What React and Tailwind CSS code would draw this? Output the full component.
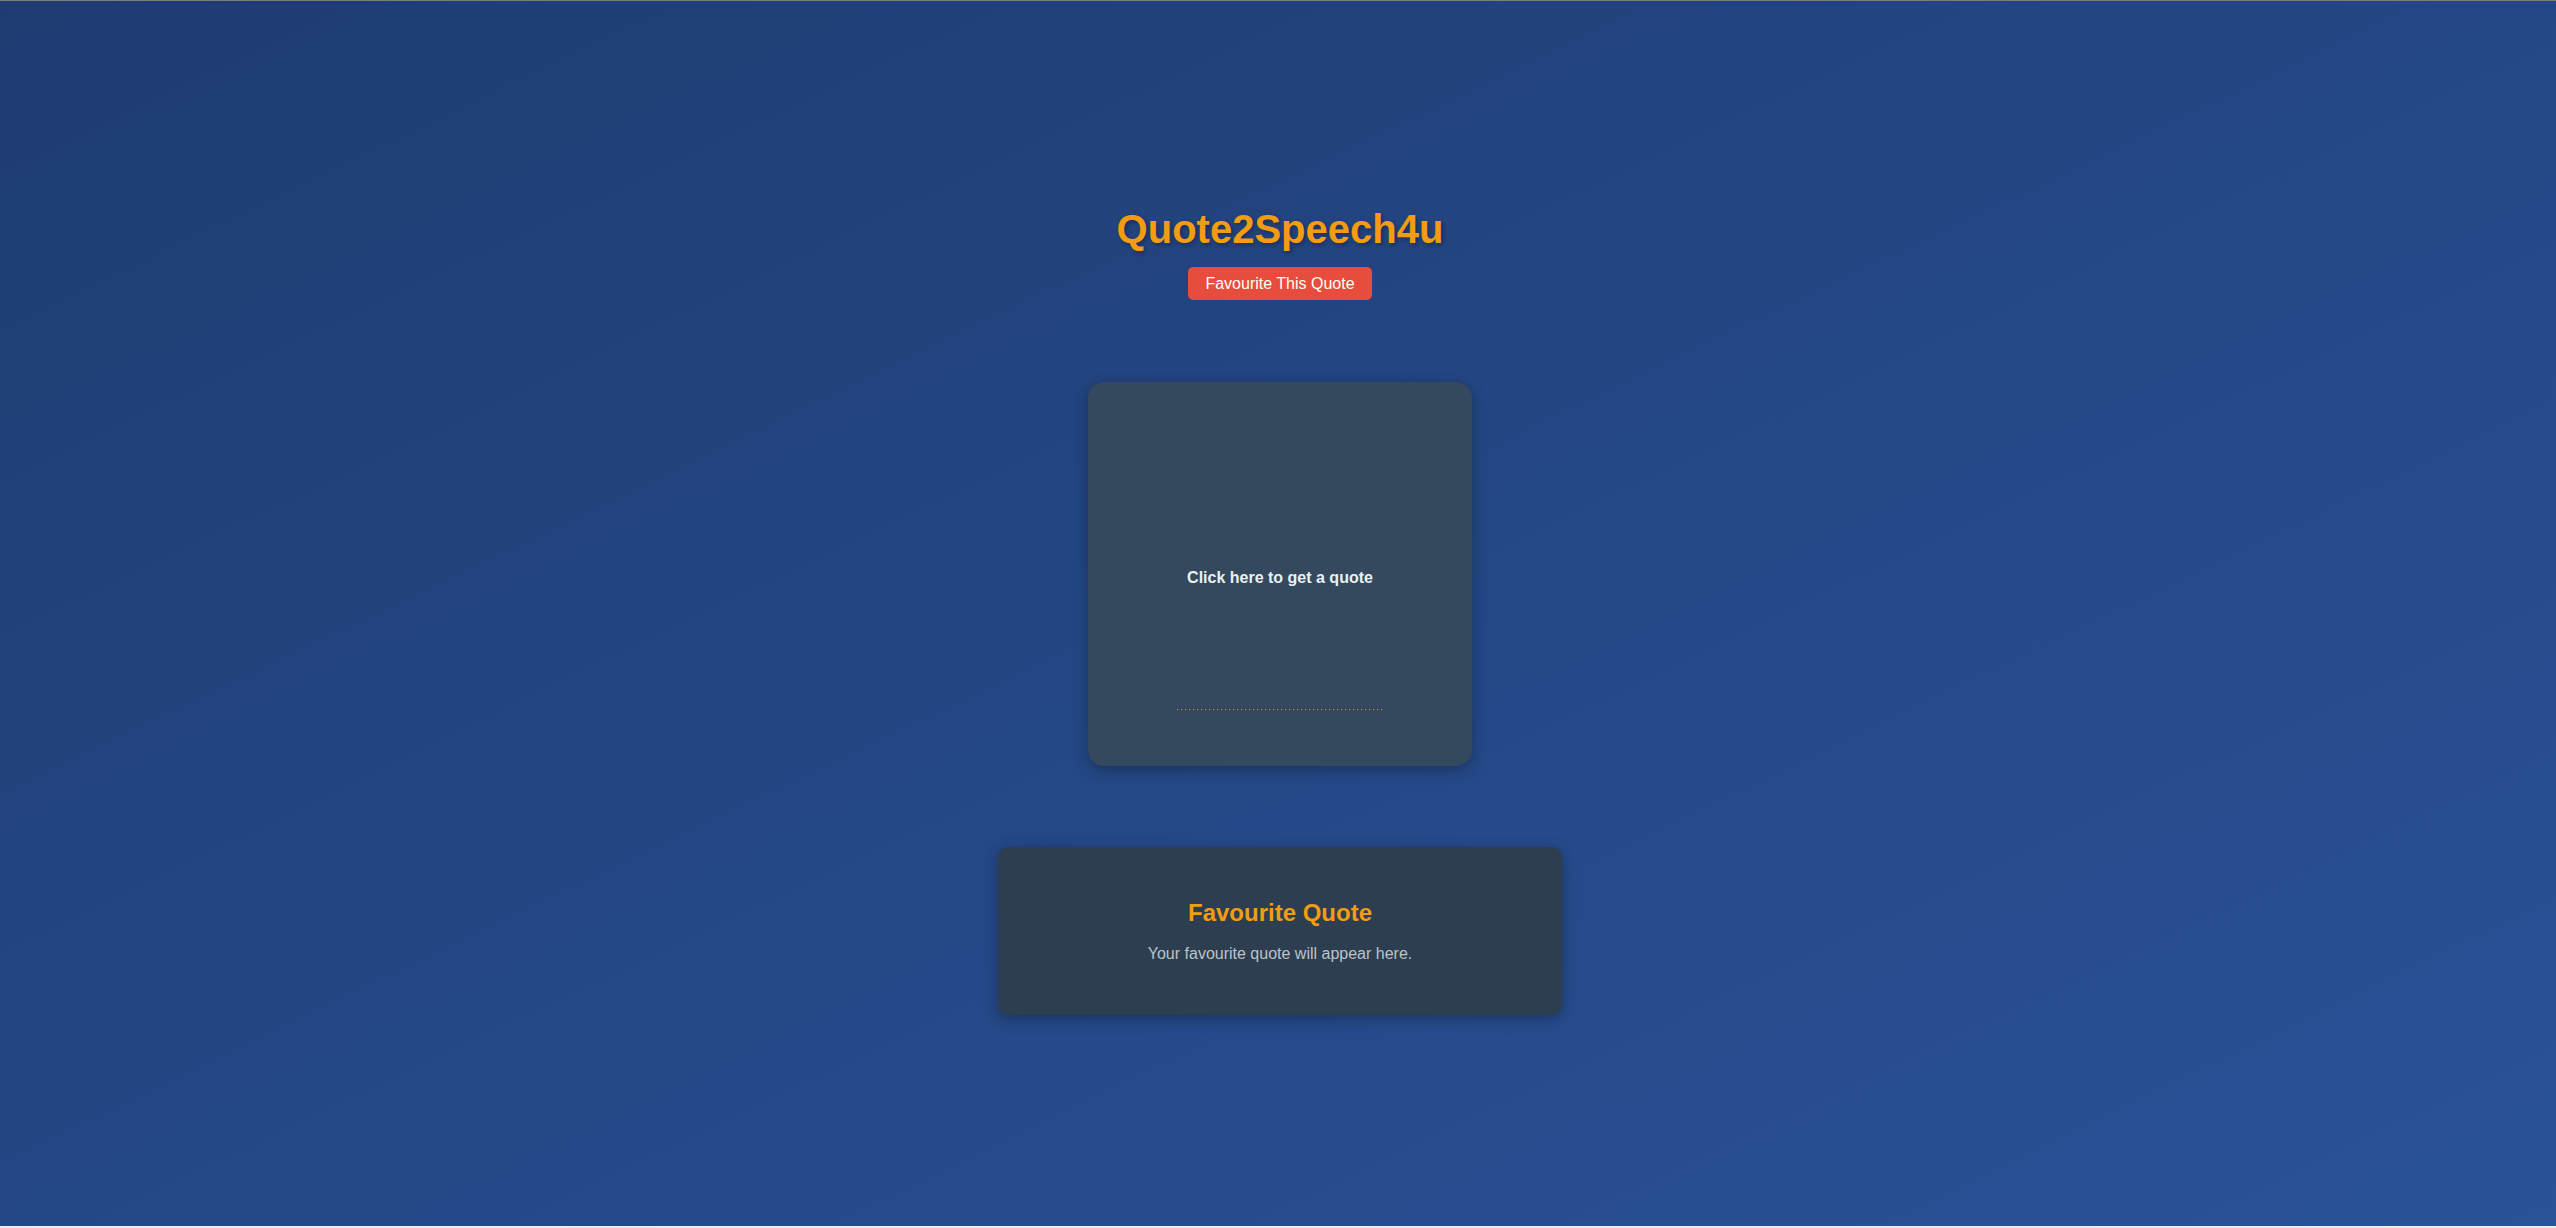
export default function App() {
  return (
    <div className="flex h-screen flex-col font-['Liberation_Sans',Arial,sans-serif]">
      <div className="h-px bg-[#7c7c7c]" />
      <div className="flex flex-1 flex-col items-center bg-linear-to-br from-[#1e3c72] to-[#2a5298] pl-1">
        {/* Header */}
        <h1 className="mt-[205px] text-[40px] leading-[46px] font-bold text-[#f39c12] [text-shadow:2px_2px_4px_rgba(0,0,0,0.3)]">
          Quote2Speech4u
        </h1>
        <button className="mt-[15px] h-[33px] rounded-[5px] bg-[#e74c3c] px-[17px] text-[16px] leading-[18px] text-white">
          Favourite This Quote
        </button>

        {/* Quote card */}
        <div className="mt-[82px] flex h-[384px] w-[384px] flex-col items-center rounded-2xl bg-[#34495e] shadow-[0_4px_15px_rgba(0,0,0,0.3)]">
          <p className="mt-[187px] text-[16px] leading-[18px] font-bold text-[#ecf0f1]">
            Click here to get a quote
          </p>
          <svg className="mt-[122px]" width="206" height="1" viewBox="0 0 206 1">
            <line x1="0" y1="0.5" x2="206" y2="0.5" stroke="#f39c12" strokeWidth="1" strokeDasharray="1 3" />
          </svg>
        </div>

        {/* Favourite card */}
        <div className="mt-[81px] flex h-[168px] w-[564px] flex-col items-center justify-center gap-[18px] rounded-[10px] bg-[#2c3e50] shadow-[0_4px_15px_rgba(0,0,0,0.3)]">
          <h2 className="text-[24px] leading-[28px] font-bold text-[#f39c12]">Favourite Quote</h2>
          <p className="text-[16px] leading-[18px] text-[#bdc3c7]">Your favourite quote will appear here.</p>
        </div>
      </div>
      <div className="h-[2px] bg-[#eeeeee]" />
    </div>
  );
}
